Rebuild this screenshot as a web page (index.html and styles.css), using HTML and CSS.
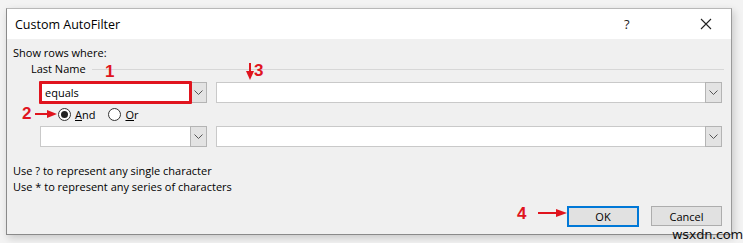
FILE: index.html
```html
<!DOCTYPE html>
<html>
<head>
<meta charset="utf-8">
<link rel="stylesheet" href="styles.css">
</head>
<body>
<div class="dialog">
  <div class="titlebar">
    <span class="title">Custom AutoFilter</span>
    <span class="help-btn">?</span>
    <span class="close-btn"><svg width="12" height="12" viewBox="0 0 12 12"><path d="M1 1L11 11M11 1L1 11" stroke="#222" stroke-width="1.1" fill="none"/></svg></span>
  </div>
  <div class="body">
    <div class="text">Show rows where:</div>
    <div class="group-label"><span>Last Name</span><span class="rule"></span></div>
    <div class="row first">
      <div class="combo small"><div class="field">equals</div><div class="btn"><svg width="9" height="5" viewBox="0 0 9 5"><path d="M0.5 0.5L4.5 4.5L8.5 0.5" stroke="#555" fill="none"/></svg></div></div>
      <div class="combo wide"><div class="field"></div><div class="btn"><svg width="9" height="5" viewBox="0 0 9 5"><path d="M0.5 0.5L4.5 4.5L8.5 0.5" stroke="#555" fill="none"/></svg></div></div>
      <div class="highlight"></div>
      <div class="num n1">1</div>
      <div class="num n3">3</div>
      <svg class="arrow-down" width="10" height="17" viewBox="0 0 10 17"><path d="M5 0V10" stroke="#e0141e" stroke-width="2"/><path d="M1 8L5 17L9 8Z" fill="#e0141e"/></svg>
    </div>
    <div class="radios">
      <span class="radio checked"></span><span class="rlabel"><u>A</u>nd</span>
      <span class="radio"></span><span class="rlabel"><u>O</u>r</span>
      <div class="num n2">2</div>
      <svg class="arrow-right a2" width="22" height="8" viewBox="0 0 22 8"><path d="M0 4H14" stroke="#e0141e" stroke-width="2"/><path d="M12 0L22 4L12 8Z" fill="#e0141e"/></svg>
    </div>
    <div class="row">
      <div class="combo small"><div class="field"></div><div class="btn"><svg width="9" height="5" viewBox="0 0 9 5"><path d="M0.5 0.5L4.5 4.5L8.5 0.5" stroke="#555" fill="none"/></svg></div></div>
      <div class="combo wide"><div class="field"></div><div class="btn"><svg width="9" height="5" viewBox="0 0 9 5"><path d="M0.5 0.5L4.5 4.5L8.5 0.5" stroke="#555" fill="none"/></svg></div></div>
    </div>
    <div class="text help1">Use ? to represent any single character</div>
    <div class="text">Use * to represent any series of characters</div>
    <div class="buttons">
      <div class="num n4">4</div>
      <svg class="arrow-right a4" width="29" height="8" viewBox="0 0 29 8"><path d="M0 4H20" stroke="#e0141e" stroke-width="2"/><path d="M18 0L29 4L18 8Z" fill="#e0141e"/></svg>
      <div class="button ok">OK</div>
      <div class="button">Cancel</div>
    </div>
  </div>
</div>
<div class="watermark">wsxdn.com</div>
</body>
</html>
```
FILE: styles.css
```css
html, body { margin: 0; padding: 0; }
body {
  width: 743px; height: 243px;
  background: #f3f3f3;
  font-family: "Open Sans", "Noto Sans", sans-serif;
  font-size: 11px;
  color: #000;
  position: relative;
  overflow: hidden;
}
.dialog {
  position: absolute;
  left: 6px; top: 8px;
  width: 724px; height: 225px;
  border: 1px solid #8a8a8a;
  border-top-color: #b8b8b8;
  border-right-color: #9a9a9a;
  background: #f0f0f0;
  box-shadow: 2px 3px 8px rgba(0,0,0,0.18);
}
.titlebar {
  height: 30px;
  background: #fff;
  display: flex;
  align-items: center;
  padding-left: 8px;
  font-size: 12.5px;
}
.title { flex: 1; }
.help-btn { width: 14px; margin-right: 62px; font-size: 13px; color: #222; }
.close-btn { width: 12px; height: 12px; margin-right: 19px; display: flex; }
.body { padding: 6px 9px 0 6px; position: relative; }
.text { line-height: 16px; height: 16px; }
.group-label {
  display: flex; align-items: center;
  margin-left: 18px; line-height: 16px; height: 16px;
}
.rule { flex: 1; height: 1px; background: #d7d7d7; margin-left: 6px; margin-right: -2px; }
.row {
  display: flex; gap: 9px;
  margin-left: 27px; margin-top: 4px;
  position: relative;
}
.row.first { margin-top: 5px; }
.combo { display: flex; height: 21px; }
.combo.small { width: 167px; }
.combo.wide { width: 508px; }
.field {
  flex: 1; background: #fff; border: 1px solid #c9c9c9; border-right: none;
  line-height: 19px; padding-left: 4px;
}
.btn {
  width: 15px; background: #e3e3e3; border: 1px solid #b4b4b4;
  display: flex; align-items: center; justify-content: center;
}
.highlight {
  position: absolute; left: -1px; top: -1px;
  width: 147px; height: 17px;
  border: 3px solid #e0141e; border-radius: 1px;
}
.num {
  position: absolute; color: #e0141e; font-weight: bold;
  font-family: "Liberation Sans", sans-serif; font-size: 17px; line-height: 16px;
}
.n1 { left: 65px; top: -18px; }
.n3 { left: 214px; top: -19px; }
.arrow-down { position: absolute; left: 205px; top: -19px; }
.radios {
  display: flex; align-items: center; height: 16px;
  margin-left: 45px; margin-top: 3px; position: relative;
}
.radio {
  border: 1px solid #333; border-radius: 50%;
  background: #fff; box-sizing: border-box; width: 13px; height: 13px;
  display: flex; align-items: center; justify-content: center; margin-right: 4px;
}
.radio.checked::after {
  content: ""; width: 7px; height: 7px; border-radius: 50%; background: #222;
}
.rlabel { margin-right: 11px; }
.rlabel:nth-child(2) { margin-right: 13px; }
.n2 { left: -36px; top: 0; }
.a2 { position: absolute; left: -23px; top: 4px; }
.help1 { margin-top: 16px; }
.buttons {
  display: flex; justify-content: flex-end; gap: 12px;
  margin-top: 11px; position: relative;
}
.button {
  width: 71px; height: 20px; box-sizing: border-box;
  background: #e1e1e1; border: 1px solid #adadad;
  display: flex; align-items: center; justify-content: center;
}
.button.ok { border: 2px solid #0078d7; width: 72px; height: 21px; }
.n4 { left: 504px; top: 0; }
.a4 { position: absolute; left: 525px; top: 3px; }
.watermark {
  position: absolute; left: 672px; top: 227px;
  font-family: "DejaVu Sans", sans-serif; font-size: 13px; color: #111;
  letter-spacing: -0.3px;
}
```
